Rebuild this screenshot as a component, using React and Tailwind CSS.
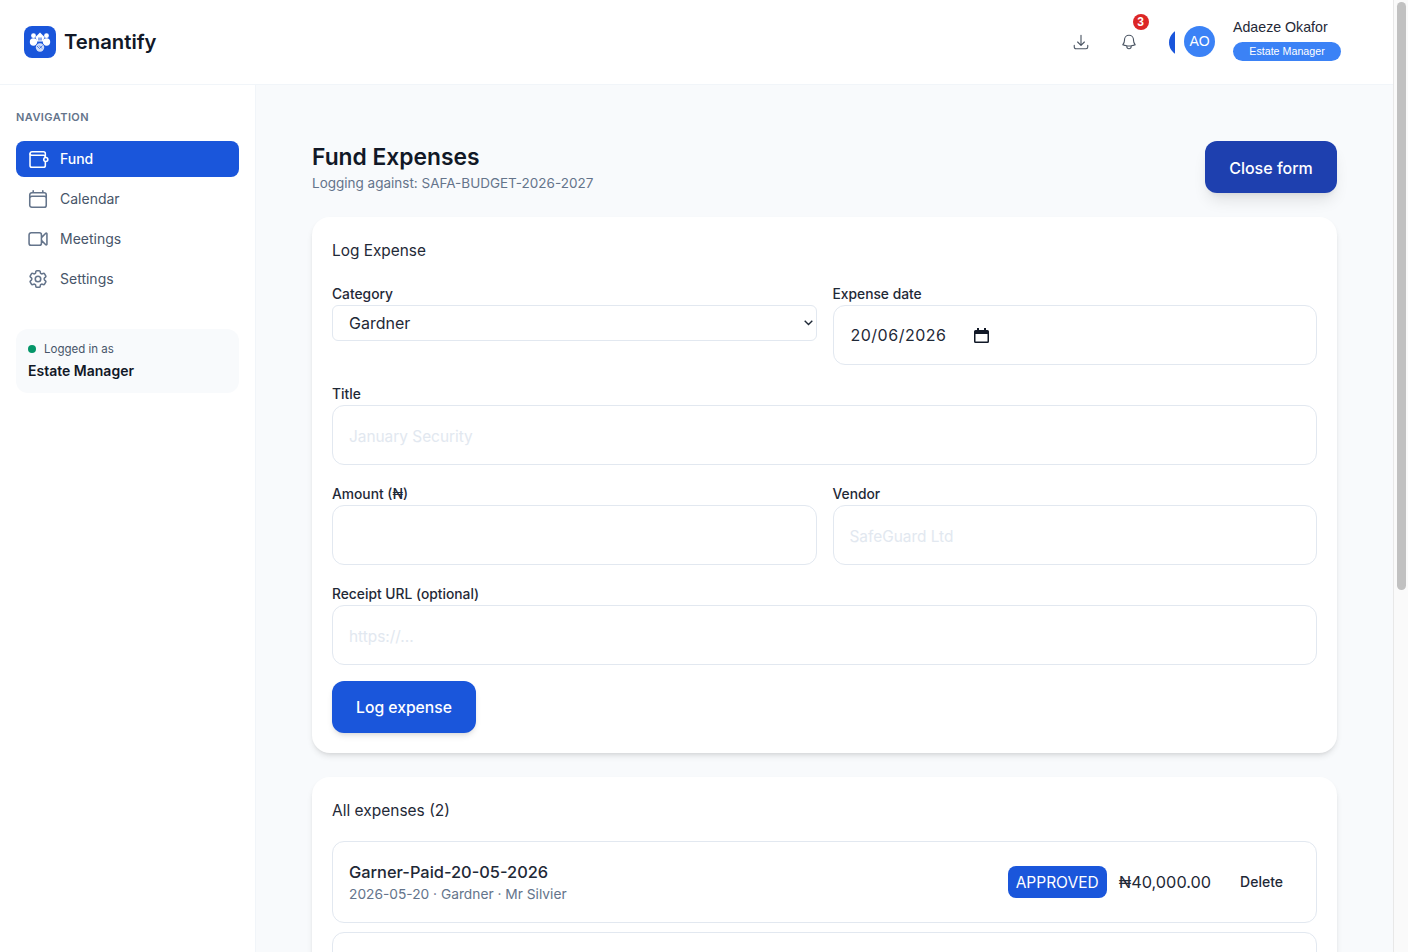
import { HiOutlineArrowDownTray, HiOutlineBell, HiOutlineCog6Tooth, HiOutlineVideoCamera, HiOutlineCalendar } from 'react-icons/hi2';

function WalletIcon({ className }) {
  return (
    <svg className={className} viewBox="0 0 24 24" fill="none" stroke="currentColor" strokeWidth="1.7" strokeLinecap="round" strokeLinejoin="round">
      <path d="M20 9.5V6a2 2 0 0 0-2-2H5.5A2.2 2.2 0 0 0 3.3 6.2V19a2 2 0 0 0 2 2H18a2 2 0 0 0 2-2v-3.5" />
      <path d="M3.3 6.5A2 2 0 0 0 5.3 8H18a2 2 0 0 1 2 1.5" />
      <circle cx="20.5" cy="12.5" r="2.2" />
    </svg>
  );
}

function CalendarDateIcon() {
  return (
    <svg className="w-[15px] h-[15px] text-[#111827]" viewBox="0 0 15 15" fill="currentColor">
      <path d="M3 0h2v2h5V0h2v2h1.5A1.5 1.5 0 0 1 15 3.5v10a1.5 1.5 0 0 1-1.5 1.5h-12A1.5 1.5 0 0 1 0 13.5v-10A1.5 1.5 0 0 1 1.5 2H3zM1.5 6v7.5h12V6z" fillRule="evenodd" />
    </svg>
  );
}

function LogoMark() {
  return (
    <svg className="w-6 h-6" viewBox="0 0 24 24" fill="white">
      <circle cx="5.5" cy="5.7" r="2.4" />
      <circle cx="18.5" cy="5.7" r="2.4" />
      <circle cx="5.5" cy="12" r="3.7" />
      <circle cx="18.5" cy="12" r="3.7" />
      <path d="M12 2.5l4.5 4.5-1.5 4.5H9L7.5 7z" />
      <path d="M10 7.5h4v3h-4z" fill="#1a56db" opacity="0.5" />
      <circle cx="12" cy="17.5" r="5" fill="#1a56db" />
      <circle cx="12" cy="17.5" r="4.2" opacity="0.8" />
      <path d="M9 16l2.5 2.5M11 15.5l3 3M14.5 15.5l-3 3" fill="none" stroke="#1a56db" strokeWidth="0.7" />
    </svg>
  );
}

const navItems = [
  { label: 'Fund', icon: WalletIcon, active: true },
  { label: 'Calendar', icon: HiOutlineCalendar },
  { label: 'Meetings', icon: HiOutlineVideoCamera },
  { label: 'Settings', icon: HiOutlineCog6Tooth },
];

function Field({ label, className, children }) {
  return (
    <div className={className}>
      <label className="block h-6 text-[13.8px] leading-[26px] font-medium text-[#1f2937]">{label}</label>
      {children}
    </div>
  );
}

const inputClass = "w-full h-[60px] rounded-xl border border-[#e2e8f0] bg-white px-4 pt-[2px] text-[15.4px] text-[#1f2937] placeholder:text-[#e2e8f0] outline-none";

export default function App() {
  return (
    <div className="min-h-screen bg-[#f8fafc] font-['Inter',sans-serif] text-[#111827] pr-[15px]">
      {/* page scrollbar as it shows in the screenshot */}
      <div className="fixed top-0 right-0 bottom-0 w-[15px] bg-[#fafafa] border-l border-[#e8e8e8]">
        <div className="mx-auto mt-[2px] w-[9px] h-[588px] rounded-full bg-[#c1c1c1]" />
      </div>

      <header className="h-[85px] bg-white border-b border-[#f1f5f9] flex items-center justify-between pl-6 pr-[52px]">
        <div className="flex items-center gap-2">
          <div className="w-8 h-8 rounded-lg bg-[#1a56db] flex items-center justify-center">
            <LogoMark />
          </div>
          <span className="pt-px text-[20.3px] font-semibold text-[#111827]">Tenantify</span>
        </div>
        <div className="flex items-center font-['Liberation_Sans',sans-serif]">
          <HiOutlineArrowDownTray className="w-[18px] h-[18px] text-[#4b5563] mr-[30px]" />
          <div className="relative mr-[31px]">
            <HiOutlineBell className="w-[18px] h-[18px] text-[#4b5563]" />
            <span className="absolute -top-[19px] left-[12.5px] w-4 h-4 rounded-full bg-[#dc2626] text-white text-[12px] font-bold flex items-center justify-center">3</span>
          </div>
          <div className="w-[6px] h-[27px] overflow-hidden mr-[9px]">
            <div className="w-[27px] h-[27px] rounded-full bg-[#1a56db]" />
          </div>
          <div className="w-[31px] h-[31px] -mt-[2px] rounded-full bg-[#3b82f6] text-white text-[14px] flex items-center justify-center mr-[18px]">AO</div>
          <div className="w-[108px] -mt-[7px]">
            <div className="text-[14.2px] leading-5 text-[#1f2937] mb-[5px]">Adaeze Okafor</div>
            <div className="h-[19px] rounded-full bg-[#3b82f6] text-white text-[10.7px] flex items-center justify-center">Estate Manager</div>
          </div>
        </div>
      </header>

      <div className="flex">
        <aside className="w-[256px] shrink-0 bg-white border-r border-[#f1f5f9] px-4 pt-6">
          <div className="text-[11px] leading-4 font-semibold tracking-[0.04em] text-[#64748b] mb-4">NAVIGATION</div>
          <nav className="flex flex-col gap-1 w-[223px]">
            {navItems.map((item) => (
              <a key={item.label} className={`h-9 pb-px flex items-center gap-[11px] px-[11px] rounded-lg text-[14px] ${item.active ? 'bg-[#1a56db] text-white font-medium' : 'text-[#475569]'}`}>
                <item.icon className={`w-[22px] h-[22px] ${item.active ? 'text-white' : 'text-[#64748b]'}`} strokeWidth={1.7} />
                {item.label}
              </a>
            ))}
          </nav>
          <div className="mt-8 w-[223px] h-16 rounded-xl bg-[#f8fafc] px-3 pt-3">
            <div className="flex items-center gap-2 text-[11.5px] leading-4 text-[#475569]">
              <span className="w-2 h-2 rounded-full bg-[#059669]" />
              Logged in as
            </div>
            <div className="mt-1 text-[14px] leading-5 font-semibold text-[#111827]">Estate Manager</div>
          </div>
        </aside>

        <main className="flex-1 min-w-0 px-14 pt-14 pb-14">
          <div className="flex items-start justify-between mb-6">
            <div>
              <h1 className="text-[22.8px] leading-8 font-semibold text-[#111827]">Fund Expenses</h1>
              <p className="text-[13.5px] leading-5 text-[#64748b]">Logging against: SAFA-BUDGET-2026-2027</p>
            </div>
            <button className="h-[52px] w-[132px] pt-px rounded-xl bg-[#1e40af] text-white text-[16px] font-medium shadow-lg">Close form</button>
          </div>

          <section className="bg-white rounded-[18px] shadow-md p-5 mb-6">
            <h2 className="h-6 text-[15.4px] leading-[27px] text-[#1f2937] mb-5">Log Expense</h2>
            <div className="grid grid-cols-2 gap-x-4 gap-y-4">
              <Field label="Category">
                <div className="relative">
                  <select defaultValue="Gardner" className="w-full h-9 appearance-none rounded-md border border-[#e2e8f0] bg-white pl-4 text-[16px] text-[#1f2937]">
                    <option>Gardner</option>
                  </select>
                  <svg className="absolute right-[4px] top-[15px] w-[9px] h-[6px] text-[#1f2937] pointer-events-none" viewBox="0 0 9 6" fill="none" stroke="currentColor" strokeWidth="1.4">
                    <path d="M0.7 0.8l3.8 3.8 3.8-3.8" />
                  </svg>
                </div>
              </Field>
              <Field label="Expense date">
                <div className="h-[60px] rounded-xl border border-[#e2e8f0] bg-white pl-[17px] flex items-center gap-[28px] text-[16px] tracking-[0.5px] text-[#1f2937]">
                  <span>20/06/2026</span>
                  <CalendarDateIcon />
                </div>
              </Field>
              <Field label="Title" className="col-span-2">
                <input className={inputClass} placeholder="January Security" />
              </Field>
              <Field label="Amount (₦)">
                <input className={inputClass} />
              </Field>
              <Field label="Vendor">
                <input className={inputClass} placeholder="SafeGuard Ltd" />
              </Field>
              <Field label="Receipt URL (optional)" className="col-span-2">
                <input className={inputClass} placeholder="https://..." />
              </Field>
            </div>
            <button className="mt-4 h-[52px] w-36 pt-px rounded-xl bg-[#1a56db] text-white text-[15.7px] font-medium shadow-md">Log expense</button>
          </section>

          <section className="bg-white rounded-[18px] shadow-md p-5">
            <h2 className="text-[15.5px] leading-6 text-[#1f2937] mt-[2px] mb-[18px]">All expenses (2)</h2>
            <div className="flex flex-col gap-[9px]">
              <div className="h-[82px] rounded-xl border border-[#e2e8f0] flex items-center justify-between pl-4 pr-4">
                <div>
                  <div className="text-[16.4px] leading-6 font-medium text-[#1f2937]">Garner-Paid-20-05-2026</div>
                  <div className="text-[13.75px] leading-5 text-[#64748b]">2026-05-20 · Gardner · Mr Silvier</div>
                </div>
                <div className="flex items-center">
                  <span className="h-8 px-2 pt-px flex items-center rounded-lg bg-[#1a56db] text-white text-[15.5px]">APPROVED</span>
                  <span className="ml-3 text-[16.3px] text-[#1f2937]">₦40,000.00</span>
                  <button className="ml-[29px] mr-[17px] pb-px text-[14px] font-medium text-[#1f2937]">Delete</button>
                </div>
              </div>
              <div className="h-[82px] rounded-xl border border-[#e2e8f0]" />
            </div>
            <div className="h-[380px]" />
          </section>
        </main>
      </div>
    </div>
  );
}
